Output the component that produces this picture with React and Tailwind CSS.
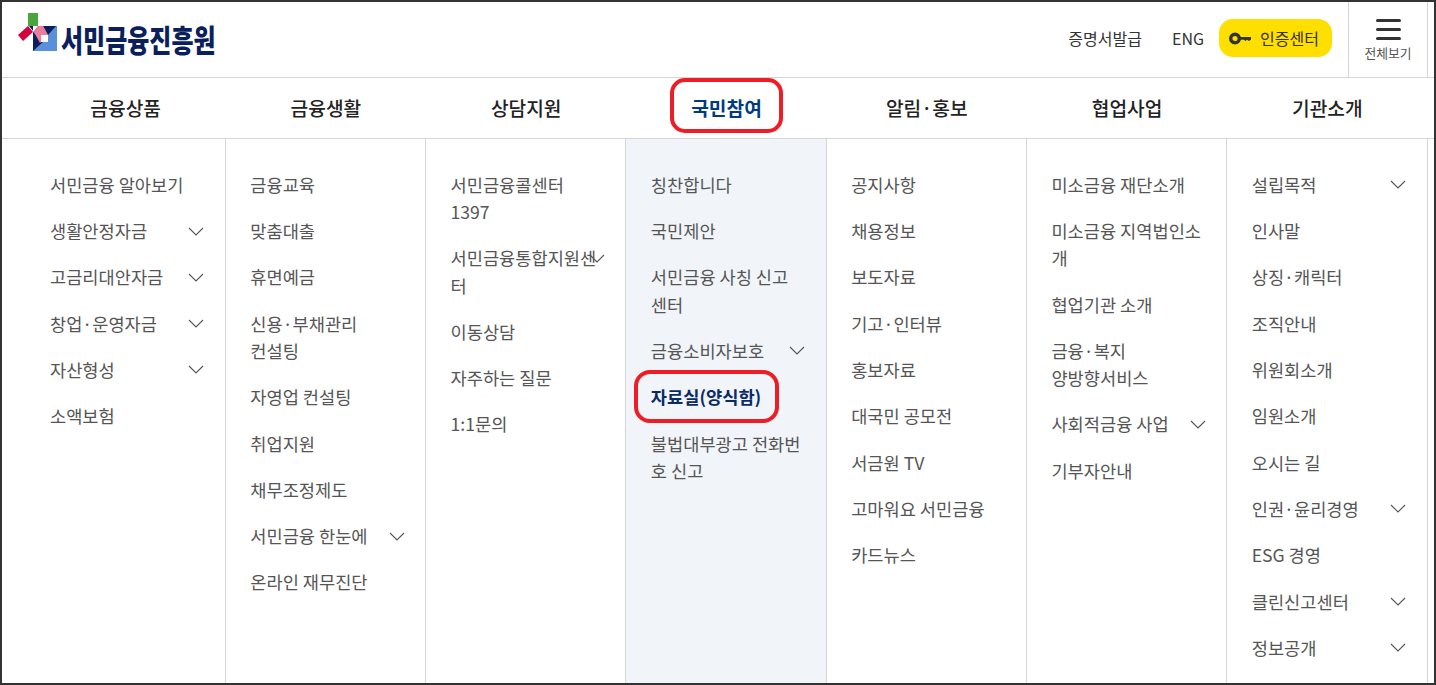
const cols = [
  [["서민금융 알아보기"],["생활안정자금",1],["고금리대안자금",1],["창업·운영자금",1],["자산형성",1],["소액보험"]],
  [["금융교육"],["맞춤대출"],["휴면예금"],["신용·부채관리\n컨설팅"],["자영업 컨설팅"],["취업지원"],["채무조정제도"],["서민금융 한눈에",1],["온라인 재무진단"]],
  [["서민금융콜센터\n1397"],["서민금융통합지원센\n터",1],["이동상담"],["자주하는 질문"],["1:1문의"]],
  [["칭찬합니다"],["국민제안"],["서민금융 사칭 신고\n센터"],["금융소비자보호",1],["자료실(양식함)",0,1],["불법대부광고 전화번\n호 신고"]],
  [["공지사항"],["채용정보"],["보도자료"],["기고·인터뷰"],["홍보자료"],["대국민 공모전"],["서금원 TV"],["고마워요 서민금융"],["카드뉴스"]],
  [["미소금융 재단소개"],["미소금융 지역법인소\n개"],["협업기관 소개"],["금융·복지\n양방향서비스"],["사회적금융 사업",1],["기부자안내"]],
  [["설립목적",1],["인사말"],["상징·캐릭터"],["조직안내"],["위원회소개"],["임원소개"],["오시는 길"],["인권·윤리경영",1],["ESG 경영"],["클린신고센터",1],["정보공개",1]],
];
const nav = ["금융상품","금융생활","상담지원","국민참여","알림·홍보","협업사업","기관소개"];

function Chevron() {
  return (
    <svg className="absolute right-[20.500px] top-[19px]" width="16" height="9" viewBox="0 0 16 9" fill="none">
      <path d="M1 1l7 7 7-7" stroke="#555" strokeWidth="1.1" />
    </svg>
  );
}

function Logo() {
  return (
    <div className="flex items-start">
      <svg width="42" height="40" viewBox="0 0 42 40" className="ml-[16px] mt-[11px]">
        <rect x="10" y="0" width="10" height="13" fill="#4aa63c" />
        <path d="M0 22 10 13 15 19 5 28Z" fill="#d6003c" />
        <path d="M11 13H20L16 19Z" fill="#0b1f5c" />
        <path d="M15 13H39V38H15Z" fill="#5a90da" />
        <path d="M20 13H15V19Z" fill="#fff" />
        <path d="M15 19V38L25 29Z" fill="#0b1f5c" />
        <path d="M25 13H38L30 22Z" fill="#0b1f5c" />
        <path d="M16 19 20 13H25L30 22 22 30Z" fill="#ef7b9b" />
        <rect x="23" y="22" width="7" height="7" fill="#fff" />
      </svg>
      <span className="ml-[1px] mt-[16px] origin-top-left scale-y-[1.3] text-[24px] leading-[32px] font-black text-[#0b1f5c]">서민금융진흥원</span>
    </div>
  );
}

export default function App() {
  return (
    <div className="relative box-border h-[685px] w-[1436px] overflow-hidden border-2 border-[#333] bg-white font-['Noto_Sans_CJK_KR','Noto_Sans',sans-serif]">
      <header className="flex h-[76px] items-start border-b border-[#d5d5d5]">
        <Logo />
        <div className="ml-auto flex h-full items-start">
          <span className="mt-[25px] text-[16px] leading-[22px] text-[#333]">증명서발급</span>
          <span className="ml-[30px] mt-[25px] text-[16px] leading-[22px] text-[#333]">ENG</span>
          <div className="ml-[15px] mt-[17px] flex h-[38px] w-[113px] items-center rounded-[14px] bg-[#ffdf00] pl-[10px] text-[16px] text-[#333]">
            <svg width="22" height="13" viewBox="0 0 22 13" fill="none">
              <circle cx="6" cy="6.500" r="4.300" stroke="#333" strokeWidth="3.400" />
              <path d="M10 5H22V7.500L20 9 18 7.700 16.500 9 15 7.700H10Z" fill="#333" />
            </svg>
            <span className="ml-[9px]">인증센터</span>
          </div>
          <div className="ml-[16px] flex h-full w-[79px] flex-col items-center border-l border-[#d5d5d5] pt-[17px]">
            <div className="flex flex-col gap-[6px]">
              <div className="h-[3px] w-[25px] rounded-full bg-[#333]" />
              <div className="h-[3px] w-[25px] rounded-full bg-[#333]" />
              <div className="h-[3px] w-[25px] rounded-full bg-[#333]" />
            </div>
            <span className="mt-[5px] text-[12.800px] leading-[16px] text-[#555]">전체보기</span>
          </div>
          <div className="h-full w-[7px] border-l border-[#d5d5d5]" />
        </div>
      </header>
      <nav className="grid h-[61px] grid-cols-7 border-b border-[#d5d5d5] pl-[23.500px] pr-[6.500px]">
        {nav.map((n, i) => (
          <div key={n} className={`flex items-center justify-center text-[19.200px] ${i === 3 ? "font-bold text-[#003a84]" : "font-medium text-[#222]"}`}>{n}</div>
        ))}
      </nav>
      <div className="grid h-[545px] grid-cols-7 pl-[23.500px] pr-[6.500px]">
        {cols.map((c, i) => (
          <ul key={i} className={`border-r border-[#d5d5d5] pt-[22.300px] ${i === 3 ? "bg-[#f1f5f9]" : ""}`}>
            {c.map(([t, chev, active]) => (
              <li key={t} className={`relative whitespace-pre-line py-[9.550px] pl-[24.500px] text-[17.600px] leading-[27.200px] ${active ? "font-bold text-[#0b2a66]" : "text-[#555]"}`}>
                {t}
                {chev ? <Chevron /> : null}
              </li>
            ))}
          </ul>
        ))}
      </div>
      <div className="absolute left-[668px] top-[76px] h-[55px] w-[113px] rounded-[15px] border-[4.500px] border-[#ee1c25]" />
      <div className="absolute left-[632px] top-[368px] h-[53px] w-[145px] rounded-[16px] border-[4.500px] border-[#ee1c25]" />
    </div>
  );
}
